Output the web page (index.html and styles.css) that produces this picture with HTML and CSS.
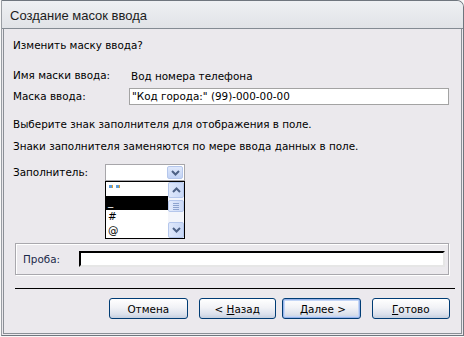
FILE: index.html
```html
<!DOCTYPE html>
<html lang="ru">
<head>
<meta charset="utf-8">
<title>Создание масок ввода</title>
<link rel="stylesheet" href="styles.css">
</head>
<body>
<div class="window">
  <div class="titlebar"><span class="title">Создание масок ввода</span></div>
  <div class="content">
    <p class="question">Изменить маску ввода?</p>
    <div class="row row-name">
      <span class="lbl">Имя маски ввода:</span>
      <span class="val">Вод номера телефона</span>
    </div>
    <div class="row row-mask">
      <span class="lbl">Маска ввода:</span>
      <div class="textbox mask">"Код города:" (99)-000-00-00</div>
    </div>
    <p class="hint hint1">Выберите знак заполнителя для отображения в поле.</p>
    <p class="hint hint2">Знаки заполнителя заменяются по мере ввода данных в поле.</p>
    <div class="row row-fill">
      <span class="lbl">Заполнитель:</span>
      <div class="combo">
        <div class="combo-field"></div>
        <div class="combo-btn">
          <svg width="9" height="6" viewBox="0 0 9 6"><path d="M1 1l3.5 3.5L8 1" fill="none" stroke="#4d6185" stroke-width="2"/></svg>
        </div>
        <div class="droplist">
          <ul class="items">
            <li class="item item-space"><span class="mk"></span><span class="mk"></span></li>
            <li class="item selected">_</li>
            <li class="item">#</li>
            <li class="item">@</li>
          </ul>
          <div class="vscroll">
            <div class="sbtn">
              <svg width="9" height="6" viewBox="0 0 9 6"><path d="M1 5l3.5-3.5L8 5" fill="none" stroke="#4d6185" stroke-width="2"/></svg>
            </div>
            <div class="thumb"><span></span><span></span><span></span><span></span></div>
            <div class="track"></div>
            <div class="sbtn">
              <svg width="9" height="6" viewBox="0 0 9 6"><path d="M1 1l3.5 3.5L8 1" fill="none" stroke="#4d6185" stroke-width="2"/></svg>
            </div>
          </div>
        </div>
      </div>
    </div>
    <div class="group">
      <span class="lbl-probe">Проба:</span>
      <div class="probe"></div>
    </div>
    <div class="separator"></div>
    <div class="buttons">
      <button class="btn">Отмена</button>
      <button class="btn">&lt; <u>Н</u>азад</button>
      <button class="btn default">&nbsp;<u>Д</u>алее &gt;</button>
      <button class="btn"><u>Г</u>отово</button>
    </div>
  </div>
</div>
</body>
</html>
```

FILE: styles.css
```css
* { box-sizing: border-box; }
html, body {
  margin: 0;
  padding: 0;
  width: 464px;
  height: 337px;
  background: #f7f7f7;
  overflow: hidden;
}
body {
  font-family: "DejaVu Sans", Verdana, sans-serif;
  font-size: 10.4px;
  color: #000;
}
.window {
  margin-left: 1px;
  width: 463px;
  height: 336px;
  border: 1px solid #6f767e;
  border-left-color: #9a9ea4;
  border-top-right-radius: 7px;
  display: flex;
  flex-direction: column;
  background: #ebe9ed;
}
.titlebar {
  height: 28px;
  flex: none;
  background: linear-gradient(#eef0f3, #e1e3e7);
  border-bottom: 1px solid #848b93;
  border-top-right-radius: 6px;
  display: flex;
  align-items: center;
  padding-left: 8px;
  padding-top: 2px;
}
.title {
  font-family: "Liberation Sans", Arial, sans-serif;
  font-size: 13px;
  color: #1c1c1c;
}
.content {
  flex: 1;
  margin-left: 1px;
  margin-right: 1px;
  border-left: 1px solid #8a8f96;
  border-right: 1px solid #8a8f96;
  border-bottom: 1px solid #8a8f96;
  margin-bottom: 1px;
  padding: 10px 0 0 9px;
  display: flex;
  flex-direction: column;
}
p { margin: 0; }
.question { line-height: 13px; }
.row {
  display: flex;
  align-items: center;
}
.lbl { width: 116px; flex: none; line-height: 13px; }
.row-name { margin-top: 17px; }
.row-name .val { padding-left: 2px; }
.row-mask { margin-top: 6px; }
.textbox {
  width: 320px;
  height: 17px;
  background: #fff;
  border: 1px solid #a3a3a3;
  padding-left: 2px;
  line-height: 15px;
  white-space: nowrap;
}
.hint { line-height: 13px; }
.hint1 { margin-top: 13px; }
.hint2 { margin-top: 9px; }
.row-fill { margin-top: 11px; align-items: center; }
.row-fill .lbl { width: 92px; }
.combo {
  position: relative;
  width: 80px;
  height: 17px;
  border: 1px solid #a7a6aa;
  background: #fff;
  display: flex;
  justify-content: flex-end;
  padding: 1px;
}
.combo-btn {
  width: 16px;
  height: 13px;
  border: 1px solid #b5c7ec;
  border-radius: 2px;
  background: linear-gradient(#dfe8fb, #c2d3f5);
  display: flex;
  align-items: center;
  justify-content: center;
}
.droplist {
  position: absolute;
  left: -1px;
  top: 16px;
  width: 80px;
  height: 58px;
  border: 1px solid #000;
  background: #fff;
  display: flex;
}
.items {
  list-style: none;
  margin: 0;
  padding: 0;
  flex: 1;
}
.item {
  height: 14px;
  line-height: 13px;
  padding-left: 2px;
  overflow: hidden;
}
.item-space { display: flex; gap: 4px; padding-top: 3px; padding-left: 3px; }
.mk {
  width: 3px;
  height: 3px;
  background: #5f9dd8;
  box-shadow: 1px 0 0 #e0a030;
}
.selected { background: #000; color: #fff; line-height: 10px; }
.vscroll {
  width: 16px;
  flex: none;
  display: flex;
  flex-direction: column;
  background: #f3f5fb;
}
.sbtn {
  height: 16px;
  border: 1px solid #b5c7ec;
  border-radius: 2px;
  background: linear-gradient(90deg, #dfe8fb, #c9d8f6);
  display: flex;
  align-items: center;
  justify-content: center;
}
.thumb {
  margin-top: 2px;
  height: 12px;
  border: 1px solid #b5c7ec;
  border-radius: 2px;
  background: linear-gradient(90deg, #e3ebfc, #cbd9f6);
  display: flex;
  flex-direction: column;
  align-items: center;
  justify-content: center;
  gap: 1px;
}
.thumb span { width: 6px; height: 1px; background: #8ea4cf; }
.track { flex: 1; }
.group {
  margin-top: 62px;
  margin-left: 2px;
  margin-right: 12px;
  height: 32px;
  border: 1px solid #a9a8ad;
  box-shadow: inset 1px 1px 0 #fff, 1px 1px 0 #fff;
  display: flex;
  align-items: center;
  padding-left: 7px;
}
.lbl-probe { width: 56px; flex: none; color: #1b2a4a; }
.probe {
  width: 366px;
  height: 16px;
  background: #fff;
  border-top: 2px solid #000;
  border-left: 2px solid #000;
  border-right: 2px solid #e6e6e6;
  border-bottom: 2px solid #e6e6e6;
}
.separator {
  margin-top: 13px;
  margin-left: 2px;
  width: 440px;
  height: 1px;
  background: #000;
}
.buttons {
  margin-top: 9px;
  display: flex;
  padding-left: 96px;
}
.btn {
  width: 79px;
  height: 21px;
  margin-right: 11px;
  font-family: "DejaVu Sans", Verdana, sans-serif;
  font-size: 10.4px;
  color: #000;
  border: 1px solid #003c74;
  border-radius: 3px;
  background: linear-gradient(#ffffff, #f1f2f6 45%, #dbe1ec 80%, #c5cfdf);
  padding: 0;
}
.btn:nth-child(2) { width: 78px; margin-right: 6px; }
.btn.default {
  box-shadow: inset 0 0 0 1px #98b4ea, inset 0 0 0 2px #c4d6f6;
}
.btn u { text-underline-offset: 1px; }
```
